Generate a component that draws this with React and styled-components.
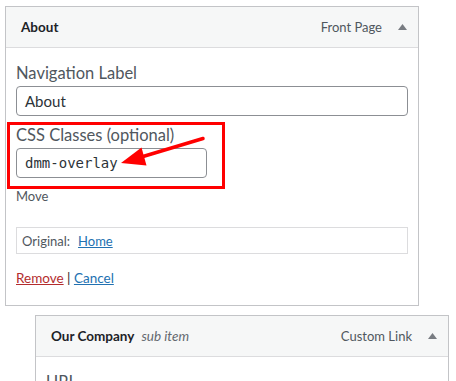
import React from "react";
import styled, { createGlobalStyle } from "styled-components";

const GlobalStyle = createGlobalStyle`
  html, body { margin: 0; padding: 0; background: #fff; }
  body { font-family: Lato, "Noto Sans", sans-serif; color: #1d2327; }
  * { box-sizing: border-box; }
`;

const Page = styled.div`
  padding: 6px 0 0 5px;
  height: 381px;
  overflow: hidden;
`;

const Card = styled.div`
  width: 414px;
  margin-left: ${(p) => p.$indent || 0}px;
  margin-top: ${(p) => p.$gap || 0}px;
  border: 1px solid #c3c4c7;
  background: #fff;
`;

const Header = styled.div`
  height: 41px;
  display: flex;
  align-items: center;
  padding: 0 11px 0 15px;
  background: #f6f7f7;
  border-bottom: 1px solid #dcdcde;
`;

const Title = styled.span`
  font-size: 13.5px;
  font-weight: 700;
  color: #1d2327;
`;

const SubTitle = styled.span`
  margin-left: 7px;
  font-size: 13.5px;
  font-style: italic;
  color: #646970;
`;

const ItemType = styled.span`
  margin-left: auto;
  font-size: 13px;
  color: #50575e;
`;

const Toggle = styled.svg`
  margin-left: 16px;
  width: 9px;
  height: 6px;
  display: block;
`;

const Body = styled.div`
  padding: ${(p) => (p.$open ? "15px 10px 17px" : "15px 10px 40px")};
`;

const Label = styled.div`
  font-size: 16.5px;
  line-height: 20px;
  color: #50575e;
`;

const Input = styled.div`
  margin-top: 3px;
  width: ${(p) => (p.$w ? `${p.$w}px` : "100%")};
  height: 30px;
  border: 1px solid #8c8f94;
  border-radius: 4px;
  padding: 0 8px;
  display: flex;
  align-items: center;
  font-family: ${(p) => (p.$mono ? '"DejaVu Sans Mono", "Liberation Mono", monospace' : "Lato, sans-serif")};
  font-size: ${(p) => (p.$mono ? "14px" : "15px")};
  color: #2c3338;
`;

const Highlight = styled.div`
  position: relative;
  margin: 6px 0 0 -9px;
  width: 218px;
  border: 3px solid #ff0000;
  padding: 0 0 8px 6px;
`;

const Arrow = styled.svg`
  position: absolute;
  left: -3px;
  top: -3px;
  width: 220px;
  height: 70px;
  overflow: visible;
`;

const Move = styled.div`
  font-size: 13px;
  line-height: 13px;
  color: #50575e;
  margin-top: 1px;
`;

const Original = styled.div`
  margin-top: 24px;
  height: 27px;
  border: 1px solid #dcdcde;
  padding: 0 5px;
  display: flex;
  align-items: center;
  font-size: 13px;
  color: #50575e;
`;

const Link = styled.a`
  color: ${(p) => (p.$danger ? "#b32d2e" : "#2271b1")};
  text-decoration: underline;
  margin-left: ${(p) => p.$ml || 0}px;
`;

const Actions = styled.div`
  margin-top: 14px;
  font-size: 13.5px;
  line-height: 20px;
  color: #1d2327;
`;

const Triangle = () => (
  <Toggle viewBox="0 0 9 6">
    <polygon points="4.5,0 9,6 0,6" fill="#787c82" />
  </Toggle>
);

export default function App() {
  return (
    <>
      <GlobalStyle />
      <Page>
        <Card>
          <Header>
            <Title>About</Title>
            <ItemType>Front Page</ItemType>
            <Triangle />
          </Header>
          <Body $open>
            <Label>Navigation Label</Label>
            <Input>About</Input>
            <Highlight>
              <Label>CSS Classes (optional)</Label>
              <Input $mono $w={191}>dmm-overlay</Input>
              <Arrow viewBox="0 0 220 70">
                <line x1="196" y1="16.5" x2="136" y2="34.5" stroke="#ff0000" strokeWidth="3.5" strokeLinecap="round" />
                <polygon points="114,41 139.5,43.5 134.5,25.5" fill="#ff0000" />
              </Arrow>
            </Highlight>
            <Move>Move</Move>
            <Original>
              Original:
              <Link href="#" $ml={8}>Home</Link>
            </Original>
            <Actions>
              <Link href="#" $danger>Remove</Link> | <Link href="#">Cancel</Link>
            </Actions>
          </Body>
        </Card>
        <Card $indent={30} $gap={9}>
          <Header>
            <Title>Our Company</Title>
            <SubTitle>sub item</SubTitle>
            <ItemType>Custom Link</ItemType>
            <Triangle />
          </Header>
          <Body>
            <Label>URL</Label>
          </Body>
        </Card>
      </Page>
    </>
  );
}
